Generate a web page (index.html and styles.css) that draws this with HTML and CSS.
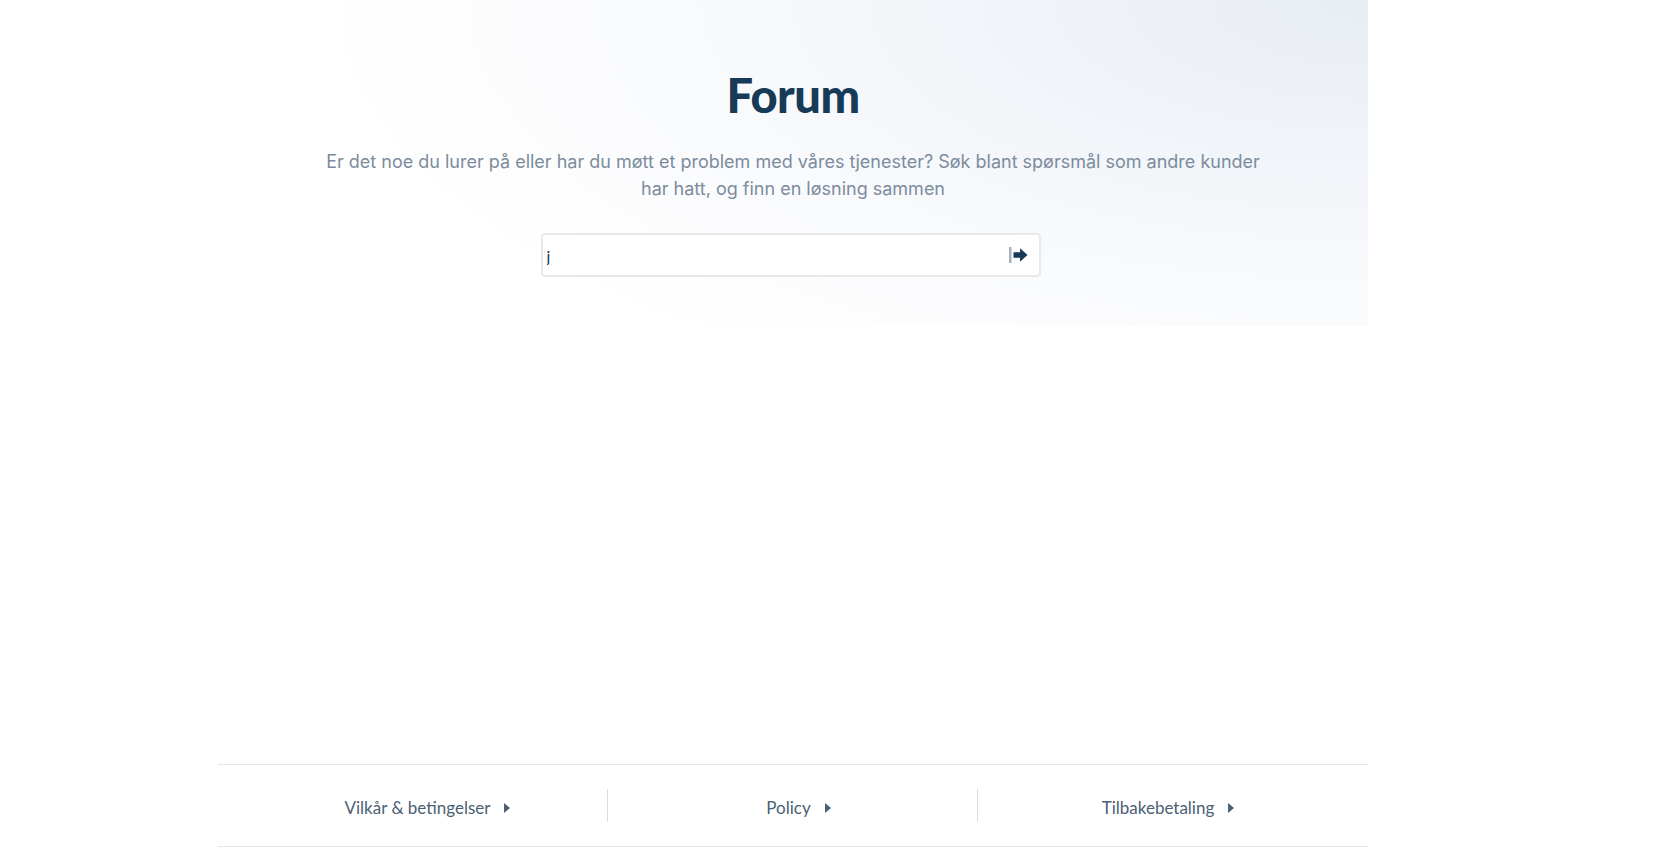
FILE: index.html
```html
<!DOCTYPE html>
<html lang="no">
<head>
<meta charset="utf-8">
<title>Forum</title>
<link rel="stylesheet" href="styles.css">
</head>
<body>
<div class="page">
  <section class="hero">
    <h1 class="hero-title">Forum</h1>
    <p class="hero-text">Er det noe du lurer på eller har du møtt et problem med våres tjenester? Søk blant spørsmål som andre kunder har hatt, og finn en løsning sammen</p>
    <form class="search">
      <input class="search-input" type="text" value="j" aria-label="Søk">
      <button class="search-btn" type="button" aria-label="Søk">
        <svg width="20" height="18" viewBox="0 0 20 18">
          <rect x="0" y="1" width="2.5" height="16" fill="#a9b3bd"/>
          <path d="M4.5 6.2 H11 V2.2 L18.5 9 L11 15.8 V11.8 H4.5 Z" fill="#173a57"/>
        </svg>
      </button>
    </form>
  </section>
  <footer class="footer">
    <a class="footer-link col-1" href="#">Vilkår &amp; betingelser <span class="caret"></span></a>
    <a class="footer-link col-2" href="#">Policy <span class="caret"></span></a>
    <a class="footer-link col-3" href="#">Tilbakebetaling <span class="caret"></span></a>
  </footer>
</div>
</body>
</html>
```
FILE: styles.css
```css
html, body {
  margin: 0;
  padding: 0;
  background: #ffffff;
}

body {
  font-family: "Lato", "Liberation Sans", sans-serif;
}

.page {
  width: 1150px;
  margin-left: 218px;
  min-height: 847px;
  display: flex;
  flex-direction: column;
}

.hero {
  height: 326px;
  display: flex;
  flex-direction: column;
  align-items: center;
  background: radial-gradient(1050px 440px at top right, #e8edf4 0%, #f2f5f9 40%, #fafbfd 72%, #ffffff 100%);
}

.hero-title {
  margin: 67px 0 0;
  font-family: "Lato", sans-serif;
  font-weight: 900;
  font-size: 47px;
  line-height: 1.2;
  color: #173a57;
  letter-spacing: -0.5px;
}

.hero-text {
  margin: 25px 0 0;
  width: 960px;
  text-align: center;
  font-family: "Inter", sans-serif;
  font-size: 18px;
  line-height: 27px;
  color: #7c8c9d;
}

.search {
  margin-top: 31px;
  margin-right: 5px;
  width: 500px;
  height: 44px;
  box-sizing: border-box;
  border: 2px solid #e9e9e9;
  border-radius: 4px;
  background: #ffffff;
  display: flex;
  align-items: center;
}

.search-input {
  flex: 1;
  min-width: 0;
  border: none;
  outline: none;
  background: transparent;
  padding: 0 0 0 4px;
  font-family: "Lato", sans-serif;
  font-size: 16px;
  color: #173a57;
}

.search-btn {
  border: none;
  background: transparent;
  padding: 0;
  margin-right: 10px;
  display: flex;
  align-items: center;
  cursor: pointer;
}

.footer {
  margin-top: auto;
  height: 83px;
  box-sizing: border-box;
  border-top: 1px solid #e6e6e6;
  border-bottom: 1px solid #e6e6e6;
  display: grid;
  grid-template-columns: 389px 370px 1fr;
  align-items: center;
}

.footer-link {
  display: flex;
  justify-content: center;
  align-items: center;
  gap: 14px;
  height: 33px;
  padding-top: 3px;
  box-sizing: border-box;
  text-decoration: none;
  font-family: "Lato", sans-serif;
  font-size: 17px;
  color: #4a5f74;
}

.col-1 { padding-left: 30px; }
.col-2 { border-left: 1px solid #dcdcdc; padding-left: 12px; }
.col-3 { border-left: 1px solid #dcdcdc; padding-right: 10px; }

.caret {
  width: 0;
  height: 0;
  border-top: 5px solid transparent;
  border-bottom: 5px solid transparent;
  border-left: 6px solid #4a5f74;
  margin-top: 2px;
}
```
